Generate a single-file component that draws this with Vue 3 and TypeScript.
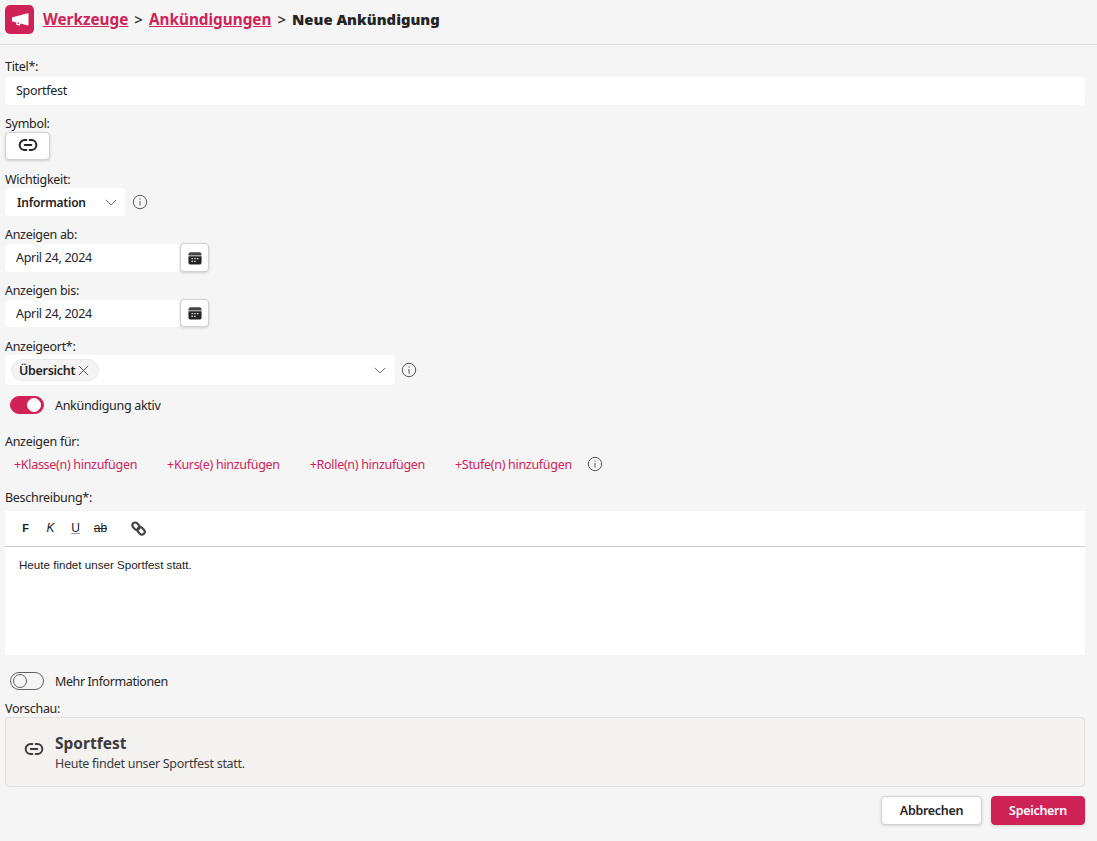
<script setup lang="ts">
const links: string[] = ['+Klasse(n) hinzufügen', '+Kurs(e) hinzufügen', '+Rolle(n) hinzufügen', '+Stufe(n) hinzufügen']
</script>

<template>
  <div class="page">
    <header class="head">
      <div class="logo">
        <svg viewBox="0 0 20 20" width="20" height="20"><path d="M2.500 7.200 17.700 3.200c.5-.1.8.2.8.6v11c0 .4-.3.7-.8.6L10.600 13.500l-.5 1.500c-.2.6-.7.8-1.200.6l-2.300-.9c-.5-.2-.7-.6-.5-1.100l.3-1.100-3.900-1c-.3-.1-.5-.3-.5-.7V7.900c0-.4.200-.6.500-.7Zm5 5.400-.3 1 1.700.7.400-1.200Z" fill="#fff" fill-rule="evenodd"/></svg>
      </div>
      <nav class="crumbs">
        <a>Werkzeuge</a><span class="sep">&gt;</span><a>Ankündigungen</a><span class="sep">&gt;</span><strong>Neue Ankündigung</strong>
      </nav>
    </header>

    <main class="form">
      <label class="lbl first">Titel*:</label>
      <input class="inp full" value="Sportfest" />

      <label class="lbl">Symbol:</label>
      <button class="iconbtn sym" type="button">
        <svg viewBox="0 0 24 24" width="20" height="20" fill="none" stroke="#242424" stroke-width="2.400" stroke-linecap="round"><path d="M10 6H8a6 6 0 0 0 0 12h2M14 6h2a6 6 0 0 1 0 12h-2M8 12h8"/></svg>
      </button>

      <label class="lbl l1">Wichtigkeit:</label>
      <div class="row">
        <div class="select imp"><b>Information</b>
          <svg class="chev" viewBox="0 0 14 8" width="12" height="7" fill="none" stroke="#666" stroke-width="1.100"><path d="M1 1l6 6 6-6"/></svg>
        </div>
        <svg class="info" viewBox="0 0 16 16" width="16" height="16" fill="none" stroke="#555"><circle cx="8" cy="8" r="6.700"/><path d="M8 7v4.500"/><circle cx="8" cy="4.900" r=".6" fill="#555" stroke="none"/></svg>
      </div>

      <label class="lbl">Anzeigen ab:</label>
      <div class="row date">
        <input class="inp dt" value="April 24, 2024" />
        <button class="iconbtn cal" type="button">
          <svg viewBox="0 0 16 16" width="14" height="14"><path d="M3 1.500h10A2.500 2.500 0 0 1 15.500 4v1H.5V4A2.500 2.500 0 0 1 3 1.500Z" fill="#444"/><path d="M.5 6h15v7a2.500 2.500 0 0 1-2.500 2.500H3A2.500 2.500 0 0 1 .5 13Z" fill="#242424"/><path d="M4 8h1.500v1.500H4zM7.200 8h1.500v1.500H7.200zM10.400 8h1.500v1.500h-1.500zM4 11h1.500v1.500H4zM7.200 11h1.500v1.500H7.200z" fill="#fff"/></svg>
        </button>
      </div>

      <label class="lbl">Anzeigen bis:</label>
      <div class="row date second">
        <input class="inp dt" value="April 24, 2024" />
        <button class="iconbtn cal" type="button">
          <svg viewBox="0 0 16 16" width="14" height="14"><path d="M3 1.500h10A2.500 2.500 0 0 1 15.500 4v1H.5V4A2.500 2.500 0 0 1 3 1.500Z" fill="#444"/><path d="M.5 6h15v7a2.500 2.500 0 0 1-2.500 2.500H3A2.500 2.500 0 0 1 .5 13Z" fill="#242424"/><path d="M4 8h1.500v1.500H4zM7.200 8h1.500v1.500H7.200zM10.400 8h1.500v1.500h-1.500zM4 11h1.500v1.500H4zM7.200 11h1.500v1.500H7.200z" fill="#fff"/></svg>
        </button>
      </div>

      <label class="lbl l4">Anzeigeort*:</label>
      <div class="row">
        <div class="select place">
          <span class="tag"><b>Übersicht</b>
            <svg viewBox="0 0 12 12" width="11" height="11" fill="none" stroke="#444"><path d="M1 1l10 10M11 1 1 11"/></svg>
          </span>
          <svg class="chev" viewBox="0 0 14 8" width="12" height="7" fill="none" stroke="#666" stroke-width="1.100"><path d="M1 1l6 6 6-6"/></svg>
        </div>
        <svg class="info" viewBox="0 0 16 16" width="16" height="16" fill="none" stroke="#555"><circle cx="8" cy="8" r="6.700"/><path d="M8 7v4.500"/><circle cx="8" cy="4.900" r=".6" fill="#555" stroke="none"/></svg>
      </div>

      <div class="switch s1">
        <span class="track on"><i></i></span>
        <span>Ankündigung aktiv</span>
      </div>

      <label class="lbl l2">Anzeigen für:</label>
      <div class="links">
        <a v-for="l in links" :key="l">{{ l }}</a>
        <svg class="info" viewBox="0 0 16 16" width="16" height="16" fill="none" stroke="#555"><circle cx="8" cy="8" r="6.700"/><path d="M8 7v4.500"/><circle cx="8" cy="4.900" r=".6" fill="#555" stroke="none"/></svg>
      </div>

      <label class="lbl l3">Beschreibung*:</label>
      <section class="editor">
        <div class="tools">
          <b class="t f">F</b><i class="t">K</i><u class="t">U</u><s class="t">ab</s>
          <svg class="chain" viewBox="0 0 16 16" width="15" height="15" fill="none" stroke="#444" stroke-width="2.300"><rect x="1" y="2.500" width="8.500" height="6" rx="3" transform="rotate(45 5.250 5.500)"/><rect x="6.500" y="7.500" width="8.500" height="6" rx="3" transform="rotate(45 10.750 10.500)"/></svg>
        </div>
        <div class="body">Heute findet unser Sportfest statt.</div>
      </section>

      <div class="switch s2">
        <span class="track"><i></i></span>
        <span>Mehr Informationen</span>
      </div>

      <label class="lbl">Vorschau:</label>
      <section class="preview">
        <svg viewBox="0 0 24 24" width="20" height="20" fill="none" stroke="#3d3d3d" stroke-width="2.400" stroke-linecap="round"><path d="M10 6H8a6 6 0 0 0 0 12h2M14 6h2a6 6 0 0 1 0 12h-2M8 12h8"/></svg>
        <div class="ptext">
          <h3>Sportfest</h3>
          <p>Heute findet unser Sportfest statt.</p>
        </div>
      </section>

      <footer class="actions">
        <button class="btn" type="button">Abbrechen</button>
        <button class="btn primary" type="button">Speichern</button>
      </footer>
    </main>
  </div>
</template>

<style>
html, body { margin: 0; background: #f5f5f5; }
</style>

<style scoped>
.page {
  width: 1097px;
  height: 841px;
  background: #f5f5f5;
  color: #242424;
  font-family: "Noto Sans", "Open Sans", sans-serif;
  font-size: 12.500px;
  letter-spacing: -.3px;
  overflow: hidden;
}
.head {
  height: 44px;
  border-bottom: 1px solid #e0e0e0;
  display: flex;
  align-items: center;
  gap: 9px;
  padding-left: 5px;
}
.logo {
  width: 29px;
  height: 29px;
  margin-top: -5px;
  border-radius: 5px;
  background: #cf2357;
  display: flex;
  align-items: center;
  justify-content: center;
}
.crumbs {
  font-size: 15px;
  font-weight: 700;
  letter-spacing: 0;
  margin-top: -6px;
  display: flex;
  align-items: baseline;
}
.crumbs a { color: #cf2357; text-decoration: underline; font-size: 15.300px; }
.crumbs strong { font-size: 14.800px; }
.sep { margin: 0 6px; font-weight: 500; }
.form {
  padding: 0 12px 0 5px;
  display: flex;
  flex-direction: column;
  align-items: flex-start;
}
.lbl { display: block; height: 17px; line-height: 17px; margin-top: 10px; }
.lbl.first { margin-top: 13px; margin-bottom: 2px; }
.lbl.l1 { margin-top: 11px; }
.lbl.l2 { margin-top: 19px; }
.lbl.l3 { margin-top: 16px; }
.lbl.l4 { margin-top: 11px; }
.inp {
  box-sizing: border-box;
  height: 28px;
  border: 0;
  border-radius: 4px;
  background: #fff;
  padding: 0 11px 2px;
  font: inherit;
  letter-spacing: inherit;
  color: inherit;
  outline: none;
}
.full { width: 1080px; }
.row { display: flex; align-items: center; }
.iconbtn {
  box-sizing: border-box;
  background: #fff;
  border: 1px solid #d1d1d1;
  border-radius: 4px;
  box-shadow: 0 1px 3px rgba(0, 0, 0, .16);
  padding: 0;
  display: flex;
  align-items: center;
  justify-content: center;
}
.sym { width: 45px; height: 28px; padding-bottom: 3px; }
.select {
  box-sizing: border-box;
  background: #fff;
  border-radius: 4px;
  display: flex;
  align-items: center;
  justify-content: space-between;
}
.select b, .tag b { font-weight: 600; }
.imp { width: 120px; height: 28px; padding: 0 8px 0 12px; }
.imp b { font-size: 12px; letter-spacing: -.2px; }
.info { flex: none; margin-left: 7px; }
.date { height: 29px; align-items: flex-end; }
.dt { width: 175px; }
.second { height: 28px; }
.second .dt { height: 27px; padding-bottom: 0; }
.cal { width: 29px; height: 29px; }
.second .cal { height: 28px; }
.place { width: 390px; height: 30px; padding: 0 9px 0 6px; }
.place + .info { margin-left: 6px; }
.tag {
  display: inline-flex;
  align-items: center;
  gap: 3px;
  height: 22px;
  padding: 0 9px 0 7px;
  border-radius: 11px;
  border: 1px solid #eaeaea;
  background: #f3f3f3;
  box-sizing: border-box;
}
.switch { display: flex; align-items: center; gap: 11px; padding-left: 5px; height: 18px; }
.s1 { margin-top: 11px; }
.s2 { margin-top: 17px; letter-spacing: -.4px; }
.track {
  box-sizing: border-box;
  width: 34px;
  height: 18px;
  border-radius: 9px;
  border: 1px solid #616161;
  background: transparent;
  display: flex;
  align-items: center;
  padding: 0 2px;
}
.track i { width: 14px; height: 14px; border-radius: 50%; border: 1px solid #616161; box-sizing: border-box; background: #f5f5f5; }
.track.on { background: #cf2357; border-color: #cf2357; justify-content: flex-end; }
.track.on i { background: #fff; border-color: #fff; }
.links { display: flex; align-items: center; height: 18px; margin-top: 5px; padding-left: 9px; }
.links a { color: #cf2357; margin-right: 30px; }
.links a:nth-child(4) { margin-right: 15px; }
.links .info { margin-left: 0; }
.editor { width: 1080px; height: 144px; margin-top: 5px; background: #fff; }
.tools {
  box-sizing: border-box;
  height: 36px;
  border-bottom: 1px solid #ccc;
  display: flex;
  align-items: center;
  padding: 0 0 1px 8px;
  font-family: "Liberation Sans", Arial, sans-serif;
  font-size: 12px;
  letter-spacing: 0;
  color: #222;
}
.t { width: 25px; text-align: center; }
.f { font-size: 11px; }
u.t { text-decoration-color: #999; }
.chain { margin-left: 18px; }
.body {
  padding: 11px 14px;
  font-family: "Liberation Sans", Arial, sans-serif;
  font-size: 11.600px;
  letter-spacing: 0;
  line-height: 14px;
  color: #222;
}
.preview {
  box-sizing: border-box;
  width: 1080px;
  height: 70px;
  border: 1px solid #e0e0e0;
  border-radius: 4px;
  background: #f3f2f1;
  display: flex;
  align-items: center;
  gap: 11px;
  padding-left: 18px;
  color: #3b3a39;
}
.preview svg { margin-bottom: 6px; }
.ptext { padding-top: 2px; }
.preview h3 { margin: 0; font-size: 15.500px; letter-spacing: 0; line-height: 20px; font-weight: 700; }
.preview p { margin: 2px 0 0; line-height: 18px; }
.actions {
  width: 1080px;
  display: flex;
  justify-content: flex-end;
  gap: 9px;
  margin-top: 9px;
}
.btn {
  box-sizing: border-box;
  height: 29px;
  width: 101px;
  background: #fff;
  border: 1px solid #d1d1d1;
  border-radius: 4px;
  box-shadow: 0 1px 3px rgba(0, 0, 0, .14);
  font: inherit;
  letter-spacing: inherit;
  font-weight: 600;
  color: #242424;
  padding: 0;
}
.primary { width: 94px; background: #cf2357; border-color: #cf2357; color: #fff; }
</style>
